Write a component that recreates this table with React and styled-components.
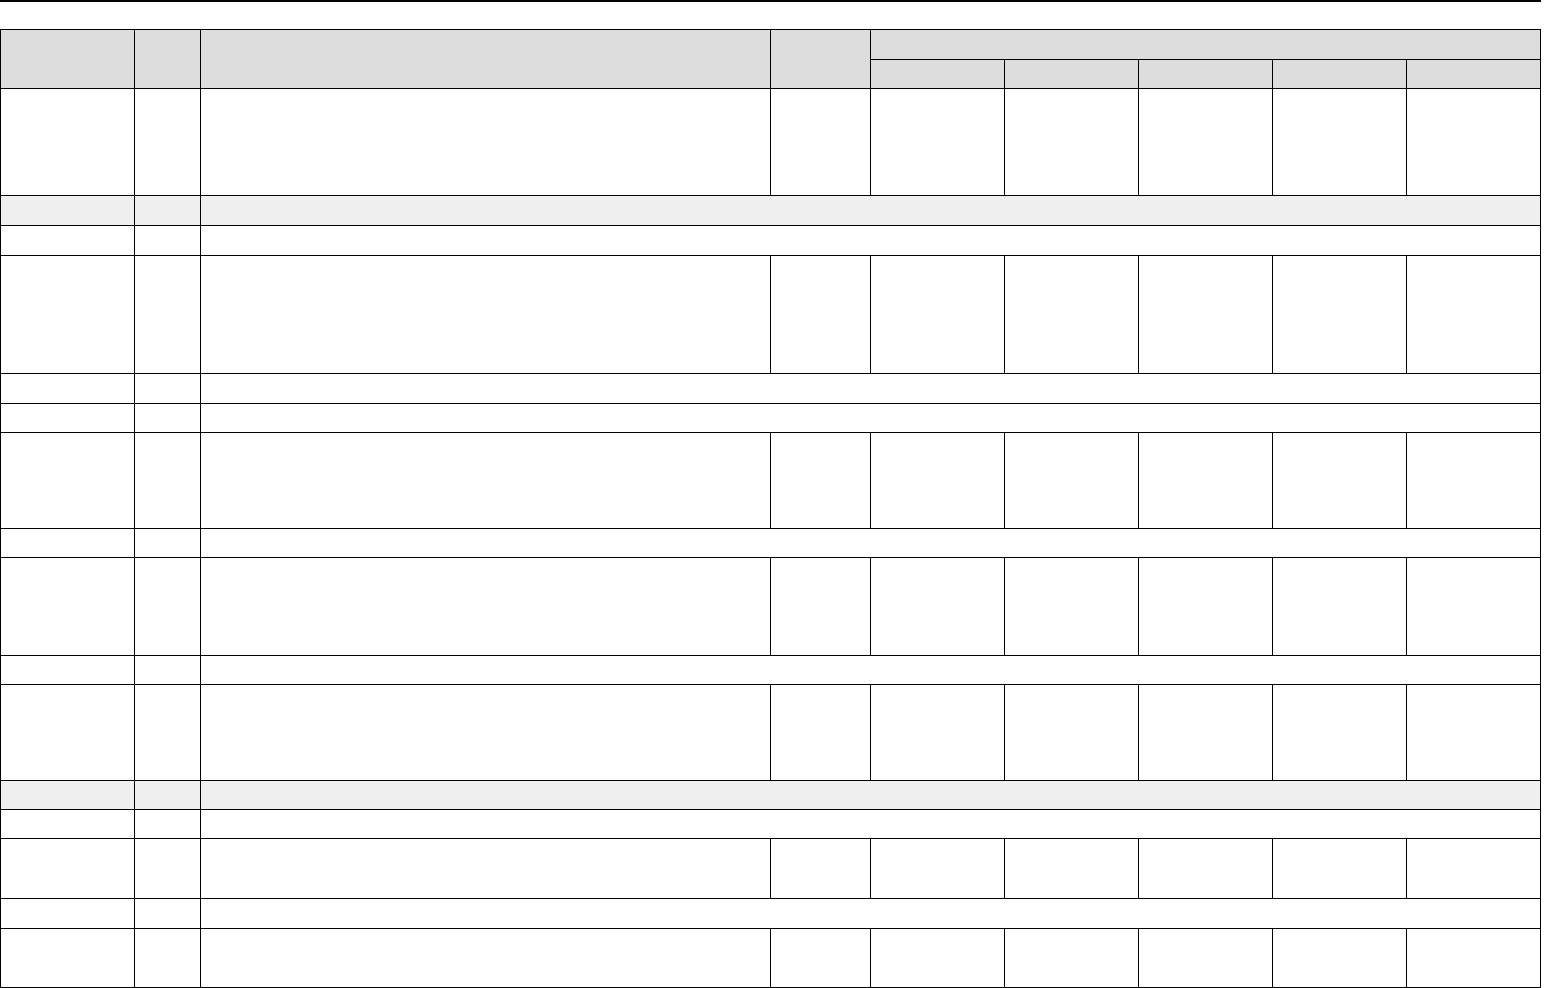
import React from 'react';
import styled, { createGlobalStyle } from 'styled-components';

const GlobalStyle = createGlobalStyle`
  html, body {
    margin: 0;
    padding: 0;
    background: #fff;
    font-family: "Liberation Sans", Arial, sans-serif;
  }
`;

const Page = styled.div`
  width: 1544px;
  height: 988px;
  overflow: hidden;
`;

const TopRule = styled.div`
  width: 1541px;
  height: 2px;
  background: #000;
  margin-bottom: 27px;
`;

const Table = styled.table`
  border-collapse: collapse;
  table-layout: fixed;
  width: 1540px;
`;

const Cell = styled.td`
  border: 1px solid #000;
  padding: 0;
  background: ${({ $shade }) => $shade || 'transparent'};
`;

const HeadCell = styled.th`
  border: 1px solid #000;
  padding: 0;
  background: #dcdcdc;
  font-weight: normal;
`;

const Row = styled.tr`
  height: ${({ $h }) => $h}px;
`;

const colWidths = [134, 66, 570, 100, 134, 134, 134, 134, 134];

// each entry: row kind and its height in px
const rows = [
  { kind: 'full', h: 107 },
  { kind: 'section', h: 30, shade: '#efefef' },
  { kind: 'section', h: 30 },
  { kind: 'full', h: 118 },
  { kind: 'section', h: 30 },
  { kind: 'section', h: 29 },
  { kind: 'full', h: 96 },
  { kind: 'section', h: 29 },
  { kind: 'full', h: 98 },
  { kind: 'section', h: 29 },
  { kind: 'full', h: 96 },
  { kind: 'section', h: 29, shade: '#efefef' },
  { kind: 'section', h: 29 },
  { kind: 'full', h: 60 },
  { kind: 'section', h: 30 },
  { kind: 'full', h: 59 },
];

export default function App() {
  return (
    <Page>
      <GlobalStyle />
      <TopRule />
      <Table>
        <colgroup>
          {colWidths.map((w, i) => (
            <col key={i} style={{ width: w }} />
          ))}
        </colgroup>
        <thead>
          <Row $h={30}>
            <HeadCell rowSpan={2} />
            <HeadCell rowSpan={2} />
            <HeadCell rowSpan={2} />
            <HeadCell rowSpan={2} />
            <HeadCell colSpan={5} />
          </Row>
          <Row $h={29}>
            <HeadCell />
            <HeadCell />
            <HeadCell />
            <HeadCell />
            <HeadCell />
          </Row>
        </thead>
        <tbody>
          {rows.map((r, i) =>
            r.kind === 'full' ? (
              <Row key={i} $h={r.h}>
                {colWidths.map((_, j) => (
                  <Cell key={j} />
                ))}
              </Row>
            ) : (
              <Row key={i} $h={r.h}>
                <Cell $shade={r.shade} />
                <Cell $shade={r.shade} />
                <Cell $shade={r.shade} colSpan={7} />
              </Row>
            )
          )}
        </tbody>
      </Table>
    </Page>
  );
}
